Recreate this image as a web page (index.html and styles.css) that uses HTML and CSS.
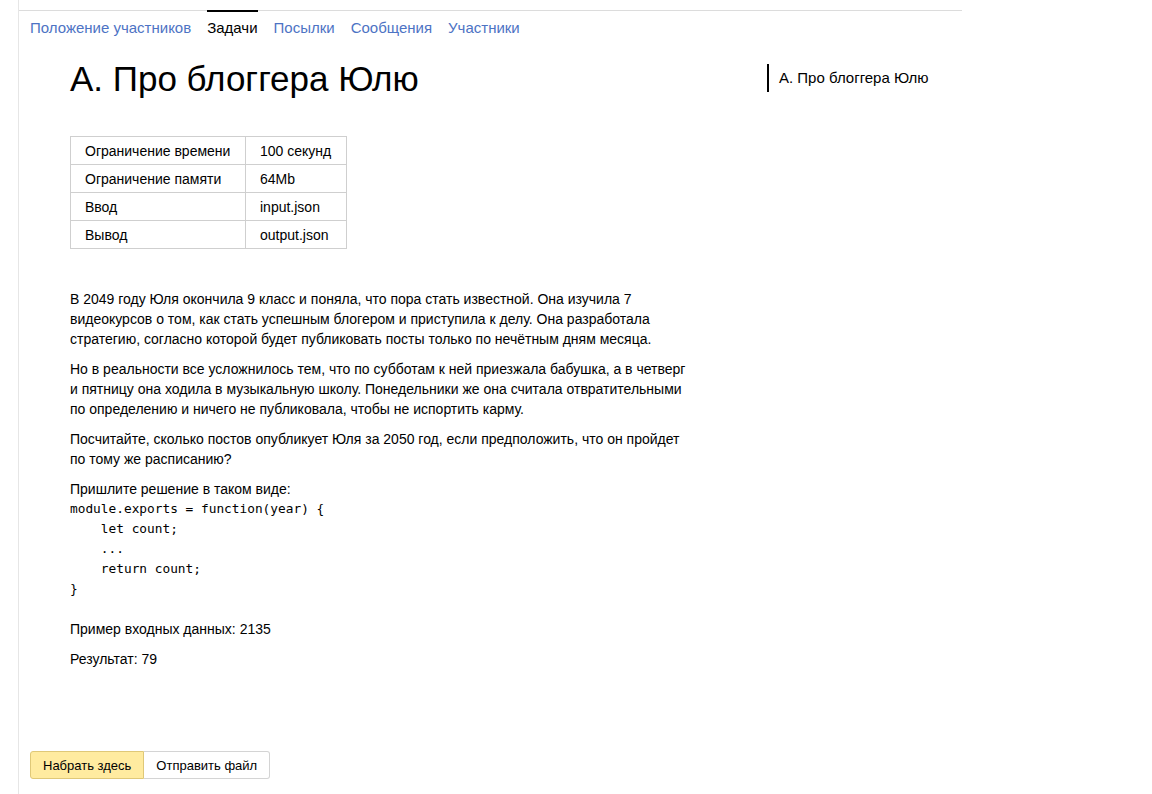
FILE: index.html
```html
<!DOCTYPE html>
<html lang="ru">
<head>
<meta charset="utf-8">
<title>А. Про блоггера Юлю</title>
<link rel="stylesheet" href="styles.css">
</head>
<body>
<div class="page">
  <nav class="tabs">
    <a class="tab" href="#">Положение участников</a>
    <a class="tab tab-active" href="#">Задачи</a>
    <a class="tab" href="#">Посылки</a>
    <a class="tab" href="#">Сообщения</a>
    <a class="tab" href="#">Участники</a>
  </nav>
  <div class="main">
    <div class="content">
      <h1 class="title">А. Про блоггера Юлю</h1>
      <table class="limits">
        <tr><td class="c1">Ограничение времени</td><td class="c2">100 секунд</td></tr>
        <tr><td class="c1">Ограничение памяти</td><td class="c2">64Mb</td></tr>
        <tr><td class="c1">Ввод</td><td class="c2">input.json</td></tr>
        <tr><td class="c1">Вывод</td><td class="c2">output.json</td></tr>
      </table>
      <div class="statement">
        <p class="para">В 2049 году Юля окончила 9 класс и поняла, что пора стать известной. Она изучила 7 видеокурсов о том, как стать успешным блогером и приступила к делу. Она разработала стратегию, согласно которой будет публиковать посты только по нечётным дням месяца.</p>
        <p class="para">Но в реальности все усложнилось тем, что по субботам к ней приезжала бабушка, а в четверг и пятницу она ходила в музыкальную школу. Понедельники же она считала отвратительными по определению и ничего не публиковала, чтобы не испортить карму.</p>
        <p class="para">Посчитайте, сколько постов опубликует Юля за 2050 год, если предположить, что он пройдет по тому же расписанию?</p>
        <p class="para para-tight">Пришлите решение в таком виде:</p>
        <pre class="code">module.exports = function(year) {
    let count;
    ...
    return count;
}</pre>
        <p class="para para-after-code">Пример входных данных: 2135</p>
        <p class="para">Результат: 79</p>
      </div>
    </div>
    <aside class="toc">
      <div class="toc-item">А. Про блоггера Юлю</div>
    </aside>
  </div>
  <div class="buttons">
    <button class="btn btn-active">Набрать здесь</button>
    <button class="btn">Отправить файл</button>
  </div>
</div>
</body>
</html>
```

FILE: styles.css
```css
html, body {
  margin: 0;
  padding: 0;
  background: #fff;
}
body {
  font-family: "Liberation Sans", Arial, sans-serif;
  color: #000;
  font-size: 14px;
}
.page {
  margin-left: 18px;
  border-left: 1px solid #e6e6e6;
  min-height: 794px;
  box-sizing: border-box;
  padding-top: 10px;
}
.tabs {
  width: 943px;
  border-top: 1px solid #dcdcdc;
  display: flex;
  padding-left: 11px;
  box-sizing: border-box;
  height: 34px;
}
.tab {
  font-size: 15px;
  line-height: 20px;
  color: #4d73c4;
  text-decoration: none;
  margin-right: 16px;
  padding-top: 6px;
  margin-top: -1px;
  border-top: 2px solid transparent;
  white-space: nowrap;
}
.tab-active {
  color: #000;
  border-top-color: #000;
}
.main {
  display: flex;
  padding-left: 51px;
}
.content {
  width: 697px;
}
.title {
  margin: 15px 0 0 0;
  font-size: 35px;
  line-height: 40px;
  font-weight: normal;
}
.limits {
  margin-top: 37px;
  border-collapse: collapse;
}
.limits td {
  border: 1px solid #cfcfcf;
  height: 28px;
  padding: 0 14px 0 14px;
  line-height: 20px;
  font-size: 14px;
  white-space: nowrap;
  box-sizing: border-box;
}
.limits .c1 { width: 175px; }
.limits .c2 { width: 101px; }
.statement {
  margin-top: 40px;
  width: 620px;
}
.para {
  margin: 0 0 10px 0;
  line-height: 20px;
}
.para-tight {
  margin-bottom: 0;
}
.code {
  margin: 0;
  font-family: "DejaVu Sans Mono", Consolas, monospace;
  font-size: 12.8px;
  line-height: 20px;
}
.para-after-code {
  margin-top: 20px;
}
.toc {
  margin-top: 20px;
}
.toc-item {
  border-left: 2px solid #000;
  padding-left: 10px;
  font-size: 15px;
  line-height: 28px;
  white-space: nowrap;
}
.buttons {
  display: flex;
  margin-left: 11px;
  margin-top: 72px;
}
.btn {
  font-family: "Liberation Sans", Arial, sans-serif;
  font-size: 13px;
  height: 28px;
  padding: 0 12px;
  background: #fff;
  border: 1px solid #d4d4d4;
  border-radius: 0;
  color: #000;
  margin: 0;
}
.btn:first-child {
  border-radius: 3px 0 0 3px;
}
.btn:last-child {
  border-radius: 0 3px 3px 0;
  border-left: none;
}
.btn-active {
  background: #ffeba0;
  border-color: #dfc878;
}
```
